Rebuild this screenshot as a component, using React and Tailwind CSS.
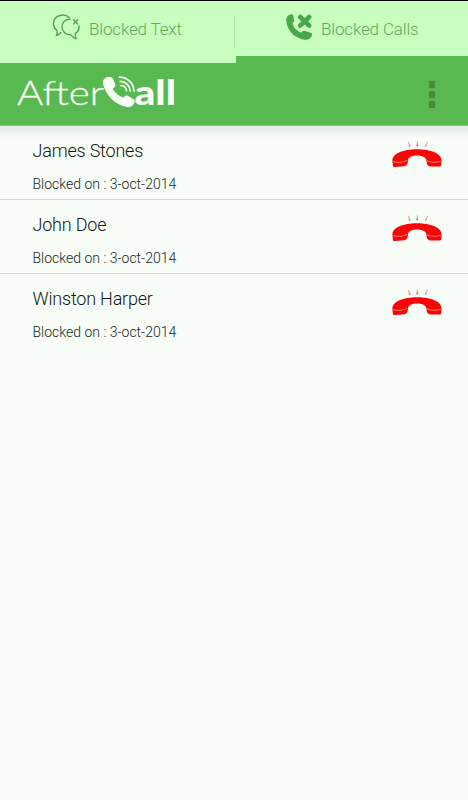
import React from 'react';

const calls = [
  { name: 'James Stones', date: '3-oct-2014' },
  { name: 'John Doe', date: '3-oct-2014' },
  { name: 'Winston Harper', date: '3-oct-2014' },
];

const ChatBlockedIcon = () => (
  <svg className="w-[30px] h-[28px] shrink-0" viewBox="0 0 30 28" fill="none" stroke="#4da650" strokeWidth="1.4" strokeLinecap="round" strokeLinejoin="round">
    <path d="M17.2 3.4C14.8 1.2 12 .5 8.8 1.2C4.4 2.2 1.4 5.6 1.4 9.8C1.5 12.6 2.9 14.9 5 16.5C5.4 18.4 5.1 20 4.3 21.5C6.2 20.9 7.6 19.9 8.8 18.5" />
    <path d="M18 5.2C13.4 4.9 10 8.4 10 12.8C10.1 17.6 13.8 21 19 20.9C20.3 22.9 21.9 24.2 24.2 24.9C23.2 23 23 21.4 23.4 19.6C26.2 17.6 27.4 15 27 12" />
    <path d="M21.6 5.8L25.8 10M25.8 5.8L21.6 10" />
  </svg>
);

const CallBlockedIcon = () => (
  <svg className="w-[27px] h-[27px] shrink-0" viewBox="0 0 27 27" fill="#47a84a">
    <path d="M4.2.4C5.5-.1 6.7.3 7.1 1.6L8.2 5.9C8.5 7.1 7.9 7.9 6.4 8.8C7.4 13.4 10.4 16.9 15 18.8C16.2 17.2 17.2 16.5 18.3 16.8L24.7 18.7C26.1 19.2 26.3 20.3 25.8 21.7C24.8 24.6 22.1 26.1 18.8 25.8C8.6 24.6.8 16.3.2 6.6C.1 3.3 1.6 1.2 4.2.4Z" />
    <path d="M14.2 3L23.2 11.6M23.2 3L14.2 11.6" stroke="#47a84a" strokeWidth="4.6" strokeLinecap="round" />
  </svg>
);

const Logo = () => (
  <svg className="w-[166px] h-[50px]" viewBox="-3 -7 166 50" fill="#f8fff6" role="img" aria-label="AfterCall">
    <text x="0" y="30" fontFamily="Lato, sans-serif" fontWeight="300" fontSize="34" textLength="87" lengthAdjust="spacingAndGlyphs" stroke="#f8fff6" strokeWidth=".3">After</text>
    <path d="M88.4 3C91.4 1.1 94.7 1.7 95.9 3.8L98.2 9.1C98.8 11.3 97.8 12.5 95.6 13.7C97.8 17.7 101.6 20.8 106.2 22.7C107.5 21 109.2 20.1 111.2 20.9L116.7 24.3C118.4 25.6 117.9 27.4 116.6 29.3C114.7 32.2 111.2 32.8 107.7 31.6C97.4 28.7 89.3 20.4 86.3 10C85.3 6.8 86 4.4 88.4 3Z" />
    <g fill="none" stroke="#f8fff6" strokeWidth="1.7" strokeLinecap="round">
      <path d="M102.4 2.1C110.5 2.1 116.8 8.3 117 16.2" />
      <path d="M103.2 6.4C108.9 6.6 113 10.7 113.2 16" />
      <path d="M104 10.5C107.1 10.8 109.3 13 109.5 15.8" />
    </g>
    <text x="117.5" y="30" fontFamily="Lato, sans-serif" fontWeight="900" fontSize="34" textLength="41.5" lengthAdjust="spacingAndGlyphs">all</text>
  </svg>
);

const RedPhoneIcon = () => (
  <svg className="w-[50px] h-[30px] shrink-0" viewBox="0 0 50 30">
    <g fill="none" stroke="#eca6a2" strokeWidth="1.2" strokeLinecap="round">
      <path d="M16.4 1.2L18 4.5M25.3 .8V4.5M35.5 1.2L33.8 4.5" />
    </g>
    <path d="M16.3 3.6L18.9 6.2L17 5.6ZM24 3.8H26.6L25.3 6ZM32.9 5.2L35.1 3.8L33.2 6.2Z" fill="#dc5651" />
    <path d="M.4 19.6C.4 12.3 11.4 8.3 25 8.3C38.6 8.3 49.6 12.3 49.6 19.6L49.2 24.3C49 25.2 48.3 25.6 47.3 25.6H38.6C36.2 25.2 34.7 23.8 34.7 21.4C34.7 16.8 31.5 14.6 25 14.6C18.5 14.6 15.8 16.8 15.8 21.3C15.6 23.6 14.2 25 12.3 25.3L3.2 26.1C1.6 26.2.9 25.6.8 24.2Z" fill="#fa0505" />
    <path d="M1.3 20.6C5.7 22.1 11.2 21.4 15 19.4M35.2 19.8C38.6 21.6 44.3 21.8 48.7 20.3" fill="none" stroke="#ff9f9a" strokeWidth=".8" />
  </svg>
);

const CallRow = ({ call, last }) => (
  <li className={`flex justify-between h-[74px] pl-[32.5px] pr-[26px] ${last ? '' : 'border-b border-[#d5dad5]'}`}>
    <div className="pt-[13px]">
      <h2 className="text-[18px] leading-[24px] font-light tracking-[-0.2px] text-[#111511]">{call.name}</h2>
      <p className="mt-[12px] text-[14px] leading-[18px] font-light text-[#222622]">Blocked on : {call.date}</p>
    </div>
    <div className="pt-[15px]">
      <RedPhoneIcon />
    </div>
  </li>
);

export default function App() {
  return (
    <div className="w-full h-screen overflow-hidden flex flex-col bg-[#f8fdf8] border-t border-black font-['Roboto',sans-serif]">
      <nav className="flex h-[62px] shrink-0 bg-[#58b950] text-[#5bab59]">
        <div className="flex w-[236px] bg-[#c8ffbf] pl-[52px] pt-[13px] justify-between">
          <div className="flex gap-[7px]">
            <ChatBlockedIcon />
            <span className="text-[17px] leading-[30px] font-light tracking-[-0.15px]">Blocked Text</span>
          </div>
          <div className="w-px h-[32px] mt-[2px] mr-px bg-[#b1e4aa]" />
        </div>
        <div className="flex flex-1 h-[55px] gap-[8px] bg-[#c8ffbf] pl-[50px] pt-[13px]">
          <CallBlockedIcon />
          <span className="text-[17px] leading-[30px] font-light tracking-[-0.15px]">Blocked Calls</span>
        </div>
      </nav>
      <header className="flex h-[63px] shrink-0 justify-between bg-[#58b950] border-b border-[#8fbe8b] pl-[14px] pr-[33px] pt-[5px]">
        <Logo />
        <div className="flex flex-col gap-[3px] pt-[13px]">
          <i className="w-[6px] h-[7px] bg-[#488839]" />
          <i className="w-[6px] h-[7px] bg-[#488839]" />
          <i className="w-[6px] h-[7px] bg-[#488839]" />
        </div>
      </header>
      <ul className="flex-1 bg-[linear-gradient(to_bottom,#e4e8e4_0,#eef1ee_6px,#f8fdf8_12px)]">
        {calls.map((call, idx) => (
          <CallRow key={call.name} call={call} last={idx === calls.length - 1} />
        ))}
      </ul>
    </div>
  );
}
